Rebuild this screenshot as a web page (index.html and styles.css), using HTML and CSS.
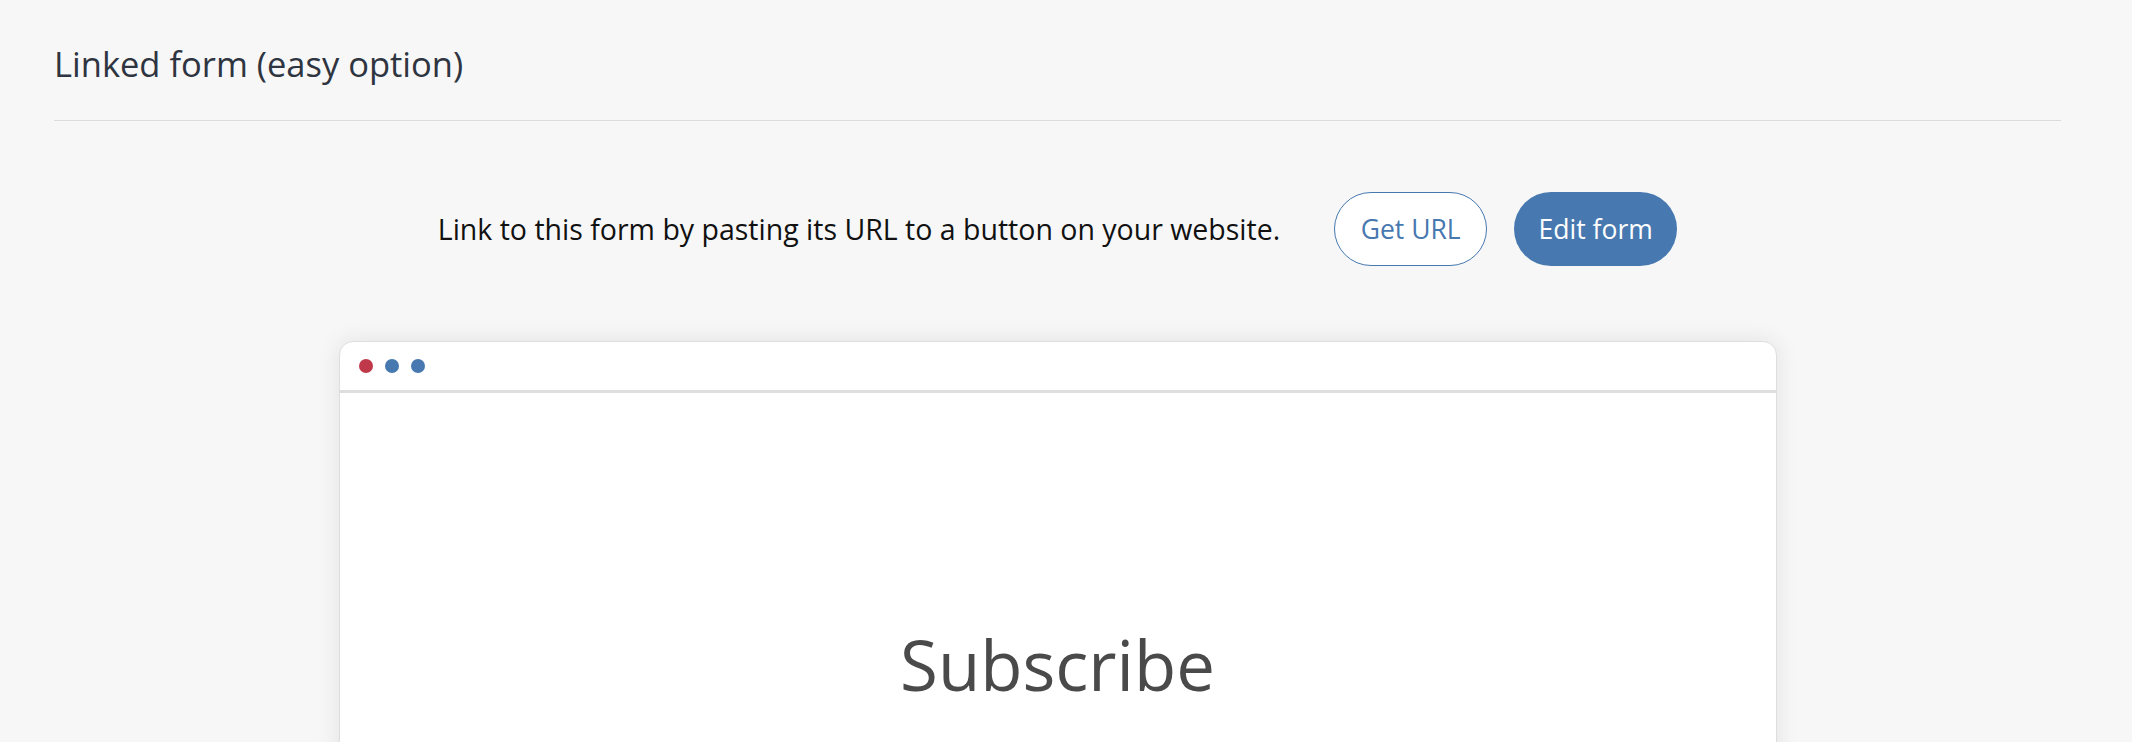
FILE: index.html
```html
<!DOCTYPE html>
<html lang="en">
<head>
    <meta charset="UTF-8">
    <meta name="viewport" content="width=device-width, initial-scale=1.0">
    <title>Linked form</title>
    <link rel="stylesheet" href="styles.css">
</head>
<body>
    <div class="page">
        <header class="section-head">
            <h2>Linked form (easy option)</h2>
        </header>
        <div class="link-row">
            <p>Link to this form by pasting its URL to a button on your website.</p>
            <div class="actions">
                <button type="button" class="btn btn-outline">Get URL</button>
                <button type="button" class="btn btn-solid">Edit form</button>
            </div>
        </div>
        <div class="preview">
            <div class="preview-bar">
                <span class="dot red"></span>
                <span class="dot blue"></span>
                <span class="dot blue"></span>
            </div>
            <div class="preview-body">
                <h1>Subscribe</h1>
            </div>
        </div>
    </div>
</body>
</html>
```

FILE: styles.css
```css
* {
    margin: 0;
    padding: 0;
    box-sizing: border-box;
}
body {
    background: #f7f7f7;
    font-family: "Open Sans", Lato, sans-serif;
    overflow: hidden;
}
.page {
    padding: 0 71px 0 54px;
}
.section-head {
    height: 121px;
    padding-top: 44px;
    border-bottom: 1px solid #dcdcdc;
}
.section-head h2 {
    font-size: 34.5px;
    font-weight: 400;
    color: #2e3440;
    line-height: 40px;
}
.link-row {
    display: flex;
    align-items: center;
    justify-content: center;
    gap: 54px;
    margin-top: 71px;
}
.link-row p {
    font-size: 28.5px;
    color: #111;
}
.actions {
    display: flex;
    gap: 27px;
}
.btn {
    height: 74px;
    border-radius: 37px;
    font-family: "Open Sans", sans-serif;
    font-size: 26.5px;
    cursor: pointer;
}
.btn-outline {
    width: 153px;
    background: #fff;
    border: 1px solid #4778b0;
    color: #4778b0;
}
.btn-solid {
    width: 163px;
    background: #4778b0;
    border: none;
    color: #fff;
}
.preview {
    width: 1438px;
    margin: 75px auto 0;
    background: #fff;
    border: 1px solid #dedede;
    border-radius: 14px 14px 0 0;
    box-shadow: 0 0 24px rgba(0, 0, 0, 0.09);
}
.preview-bar {
    display: flex;
    align-items: center;
    gap: 12px;
    height: 51px;
    padding-left: 19px;
    border-bottom: 3px solid #dedede;
}
.dot {
    width: 14px;
    height: 14px;
    border-radius: 50%;
}
.red {
    background: #c0394b;
}
.blue {
    background: #4778b0;
}
.preview-body {
    height: 600px;
    padding-top: 226px;
    text-align: center;
}
.preview-body h1 {
    font-size: 69px;
    font-weight: 400;
    color: #4a4a4a;
    line-height: 90px;
}
```
